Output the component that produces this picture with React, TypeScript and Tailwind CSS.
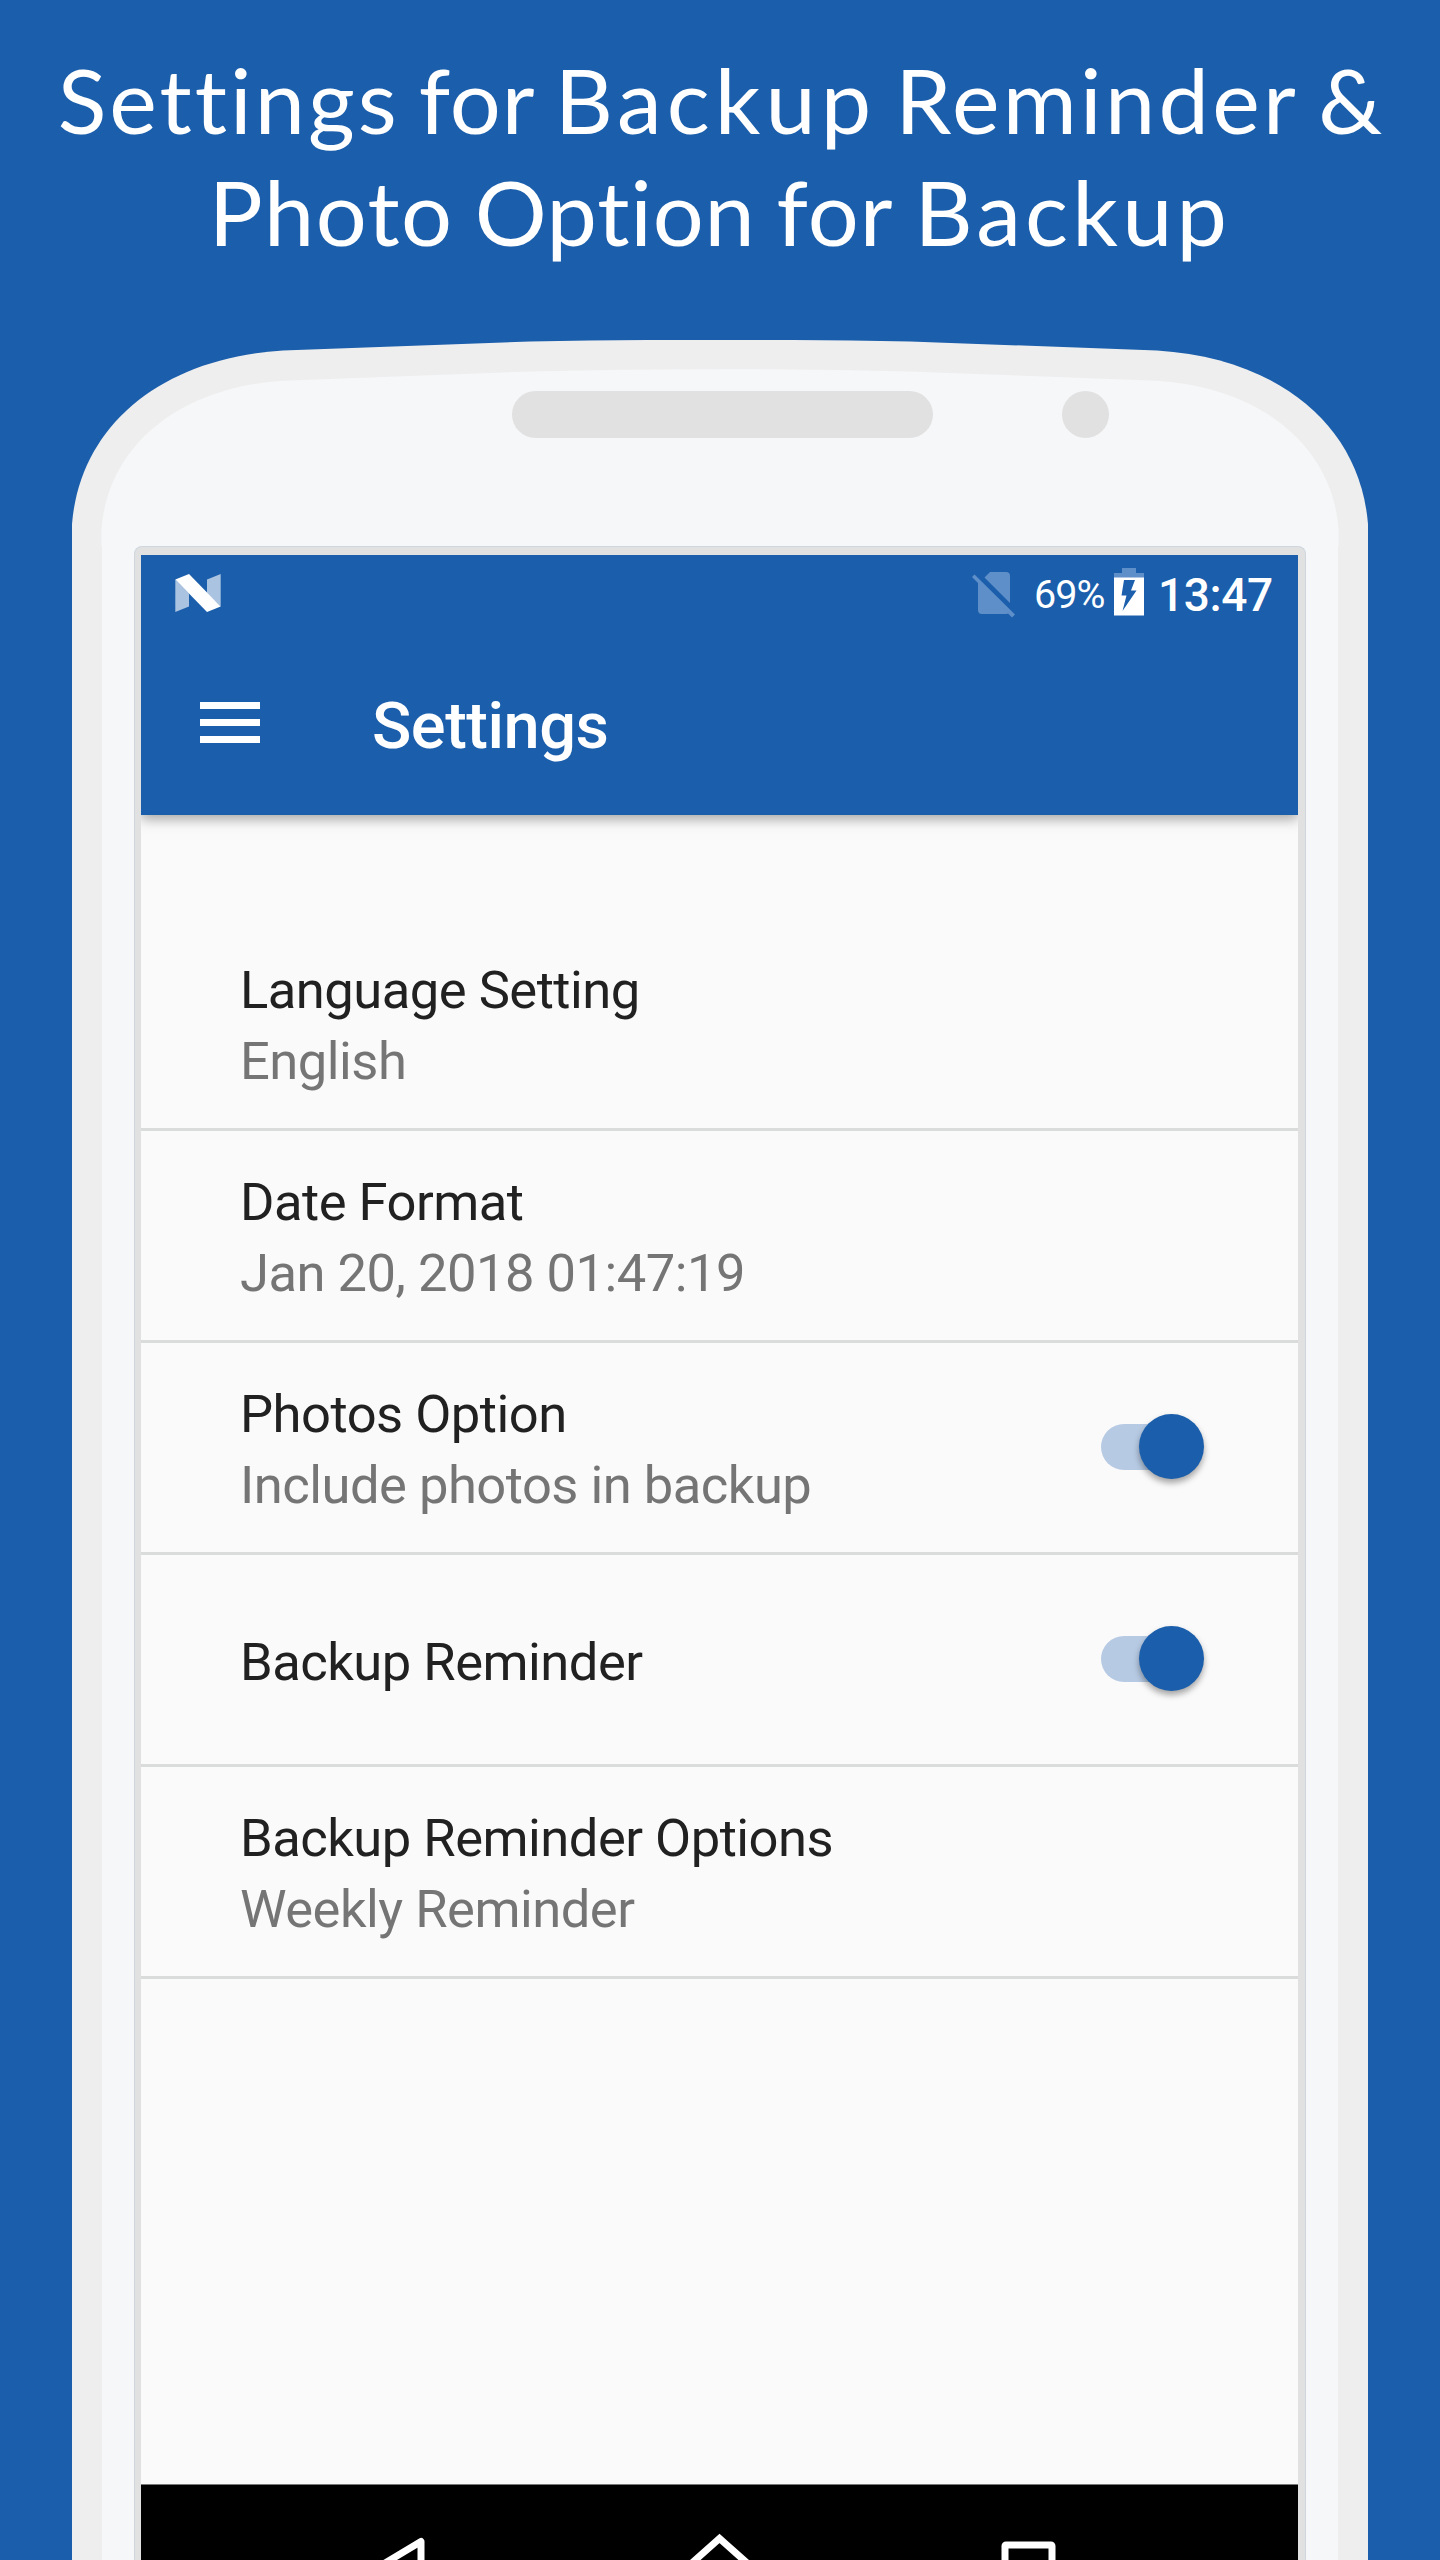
import React from 'react';

type SettingItem = {
  title: string;
  summary?: string;
  hasSwitch?: boolean;
};

const SETTINGS: SettingItem[] = [
  { title: 'Language Setting', summary: 'English' },
  { title: 'Date Format', summary: 'Jan 20, 2018 01:47:19' },
  { title: 'Photos Option', summary: 'Include photos in backup', hasSwitch: true },
  { title: 'Backup Reminder', hasSwitch: true },
  { title: 'Backup Reminder Options', summary: 'Weekly Reminder' },
];

const Headline: React.FC = () => (
  <h1 className="flex h-[340px] flex-col items-center pt-[43px] text-center font-['Lato',sans-serif] text-[90px] leading-[112px] [word-spacing:-4px] whitespace-nowrap text-white">
    <span>
      <span className="tracking-[3px]">Settings</span> <span className="tracking-[1px]">for</span>{' '}
      <span className="tracking-[5px]">Backup</span> <span className="tracking-[3.3px]">Reminder</span> &amp;
    </span>
    <span className="[word-spacing:-2px]">
      <span className="tracking-[1.5px]">Photo</span> <span className="tracking-[0.8px]">Option</span>{' '}
      <span className="tracking-[1px]">for</span> <span className="tracking-[4.2px]">Backup</span>
    </span>
  </h1>
);

const PhoneTop: React.FC = () => (
  <div className="relative h-[206px] shrink-0">
    <svg className="block h-[206px] w-[1296px]" viewBox="72 340 1296 206" aria-hidden="true">
      <path
        d="M72 546V524C80 425 162 358 283 350.500L530 341.500Q720 338 910 341.500L1157 350.500C1278 358 1360 425 1368 524V546Z"
        fill="#eeeeee"
      />
      <path
        d="M101.500 546V530C107 446 180 385 290 380.500L530 371.500Q720 367 910 371.500L1150 380.500C1260 385 1333 446 1338.500 530V546Z"
        fill="#f6f7f9"
      />
    </svg>
    <div className="absolute top-[51px] left-[440px] h-[47px] w-[421px] rounded-full bg-[#e1e1e1]" />
    <div className="absolute top-[51px] left-[990px] size-[47px] rounded-full bg-[#e1e1e1]" />
  </div>
);

const StatusBar: React.FC = () => (
  <div className="flex h-[76px] items-start text-white">
    <svg className="mt-[19px] ml-[34px] h-[38px] w-[46px]" viewBox="0 0 46 38" fill="#fff">
      <path d="M0.300 5.500L14 19.500V32.500L0.300 38Z" opacity=".63" />
      <path d="M32 5.500L45.700 0V32.500L32 19Z" opacity=".63" />
      <path d="M0.300 5.500L14 0L45.700 32.500L32 38Z" />
    </svg>
    <svg className="mt-[17px] ml-auto h-[46px] w-[43px]" viewBox="0 0 43 46" fill="#5f8fc8">
      <path d="M12.500 5.500L18 0H34Q38 0 38 4V31Z" />
      <path d="M2.500 2.500L43 42.500L40 45.500L36 41.500Q35 42 34 42H10Q6 42 6 38V11L0 5Z" />
    </svg>
    <span className="mt-[17px] ml-[19px] w-[71px] text-[39.5px] leading-[46px] tracking-[-1px]">69%</span>
    <svg className="mt-[13px] ml-[9px] h-[48px] w-[30px]" viewBox="0 0 30 48">
      <path d="M8 0H22V5H30V10H0V5H8Z" fill="#5f8fc8" />
      <path d="M0 9.500H30V47.500H0Z" fill="#fff" />
      <path d="M10 12H21L17 22.500H22.500L8.500 43L12.500 27.500H7.500Z" fill="#1b5fad" />
    </svg>
    <span className="mt-[13px] mr-[27px] ml-[14px] w-[113px] text-[46px] leading-[54px] font-medium tracking-[-0.4px]">
      13:47
    </span>
  </div>
);

const AppBar: React.FC = () => (
  <header className="relative z-10 h-[260px] bg-[#1a5eac] shadow-[0_4px_12px_rgba(0,0,0,0.35)]">
    <StatusBar />
    <div className="flex h-[184px] items-start">
      <button className="mt-[71px] ml-[59px] flex w-[60px] flex-col gap-[10px]" aria-label="Menu">
        <span className="h-[7px] w-full bg-white" />
        <span className="h-[7px] w-full bg-white" />
        <span className="h-[7px] w-full bg-white" />
      </button>
      <h2 className="mt-[57px] ml-[112px] text-[65px] leading-[76px] font-medium tracking-[-0.5px] text-white">
        Settings
      </h2>
    </div>
  </header>
);

const Switch: React.FC = () => (
  <div className="relative flex h-[66px] w-[103px] items-center" role="switch" aria-checked="true">
    <div className="h-[46px] w-[80px] rounded-full bg-[#b6cae3]" />
    <div className="absolute top-0 right-0 size-[65px] rounded-full bg-[#1a5eac] shadow-[0_4px_6px_rgba(0,0,0,0.35)]" />
  </div>
);

const SettingRow: React.FC<{ item: SettingItem }> = ({ item }) => (
  <li className="flex h-[212px] items-center justify-between border-b-3 border-[#dadbdb] pr-[94px] pb-px pl-[99px]">
    <div className="pt-[6px] text-[52.5px] leading-[71px] tracking-[-0.5px] whitespace-nowrap">
      <p className="text-[#212121]">{item.title}</p>
      {item.summary && <p className="text-[#757575]">{item.summary}</p>}
    </div>
    {item.hasSwitch && <Switch />}
  </li>
);

const NavBar: React.FC = () => (
  <nav className="h-[76px] shrink-0 border-t border-[#777] bg-black">
    <svg className="block h-[75px] w-[1157px]" viewBox="141 2485 1157 75" fill="none" stroke="#fff" strokeWidth="7">
      <path d="M421 2541.500V2620L341 2589.500Z" strokeLinejoin="round" />
      <path d="M675 2578L719.500 2538.500L764 2578" />
      <rect x="1005" y="2545" width="47" height="50" rx="1" />
    </svg>
  </nav>
);

export default function App() {
  return (
    <div className="h-[2560px] w-[1440px] overflow-hidden bg-[#1a5eac] font-['Roboto',sans-serif]">
      <Headline />
      <div className="mx-auto flex h-[2220px] w-[1296px] flex-col">
        <PhoneTop />
        <div className="flex flex-1 border-x-[30px] border-[#eeeeee] bg-[#f6f7f9] px-[32px]">
          <div className="flex w-[1172px] flex-col rounded-t-[8px] border border-b-0 border-[#cfd6de] bg-[#e1e1e1] pt-[8px] pr-[7px] pl-[6px]">
            <div className="flex flex-1 flex-col overflow-hidden bg-[#fafafa]">
              <AppBar />
              <ul className="flex-1 pt-[104px]">
                {SETTINGS.map((item) => (
                  <SettingRow key={item.title} item={item} />
                ))}
              </ul>
              <NavBar />
            </div>
          </div>
        </div>
      </div>
    </div>
  );
}
